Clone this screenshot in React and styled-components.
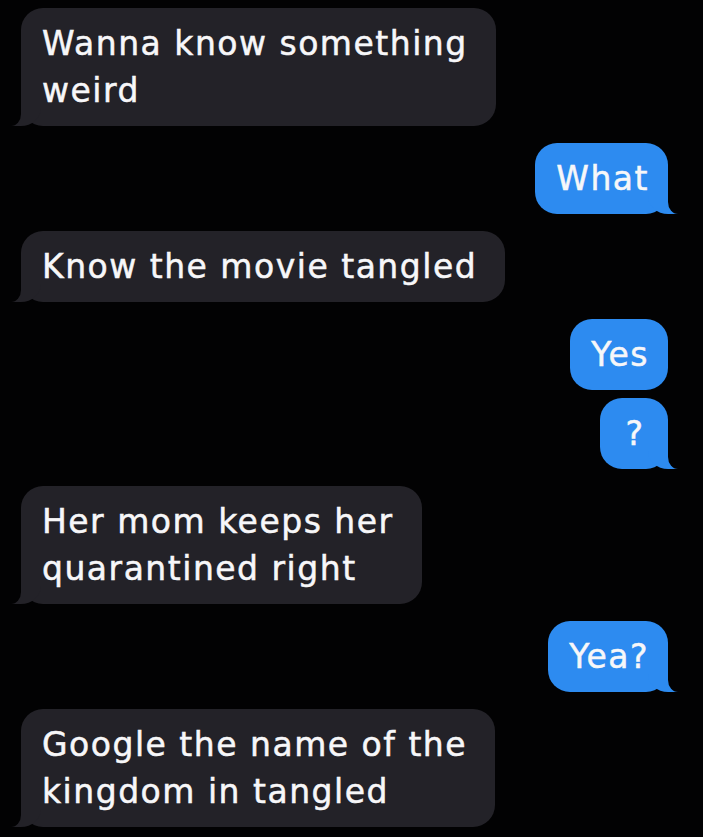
import styled, { createGlobalStyle, css } from 'styled-components'

const GlobalStyle = createGlobalStyle`
  html, body {
    margin: 0;
    padding: 0;
    background: #020203;
  }
`

const GRAY = '#232228'
const BLUE = '#2d8bf0'
const BG = '#020203'

const Thread = styled.div`
  width: 703px;
  height: 837px;
  box-sizing: border-box;
  padding: 8px 35px 0 21px;
  display: flex;
  flex-direction: column;
  overflow: hidden;
  font-family: 'DejaVu Sans', 'Liberation Sans', sans-serif;
`

const incomingTail = css`
  &::before {
    left: -10px;
    border-bottom-right-radius: 20px 18px;
  }
  &::after {
    left: -30px;
    border-bottom-right-radius: 10px 12px;
  }
`

const outgoingTail = css`
  &::before {
    right: -10px;
    border-bottom-left-radius: 20px 18px;
  }
  &::after {
    right: -30px;
    border-bottom-left-radius: 10px 12px;
  }
`

const Bubble = styled.div`
  position: relative;
  align-self: ${(p) => (p.$me ? 'flex-end' : 'flex-start')};
  margin-top: ${(p) => p.$gap}px;
  padding: 12px ${(p) => (p.$me ? '19px' : '28px')} 12px ${(p) => (p.$me ? '21px' : '21px')};
  border-radius: 22px;
  background: ${(p) => (p.$me ? BLUE : GRAY)};
  color: #f7f7f9;
  font-size: 33px;
  line-height: 47px;
  letter-spacing: 1.5px;
  -webkit-text-stroke: 0.5px #f7f7f9;
  white-space: nowrap;
  text-align: left;

  ${(p) =>
    p.$tail &&
    css`
      &::before,
      &::after {
        content: '';
        position: absolute;
        bottom: 0;
        height: 24px;
      }
      &::before {
        width: 30px;
        background: ${p.$me ? BLUE : GRAY};
      }
      &::after {
        width: 30px;
        background: ${BG};
      }
    `}
  ${(p) => p.$tail && (p.$me ? outgoingTail : incomingTail)}
`

const Short = styled(Bubble)`
  min-width: 28px;
  text-align: center;
`

const messages = [
  { me: false, gap: 0, tail: true, lines: ['Wanna know something', 'weird'] },
  { me: true, gap: 17, tail: true, lines: ['What'] },
  { me: false, gap: 17, tail: true, lines: ['Know the movie tangled'] },
  { me: true, gap: 17, tail: false, lines: ['Yes'] },
  { me: true, gap: 8, tail: true, lines: ['?'], short: true },
  { me: false, gap: 17, tail: true, lines: ['Her mom keeps her', 'quarantined right'] },
  { me: true, gap: 17, tail: true, lines: ['Yea?'] },
  { me: false, gap: 17, tail: true, lines: ['Google the name of the', 'kingdom in tangled'] },
]

export default function App() {
  return (
    <>
      <GlobalStyle />
      <Thread>
        {messages.map((m, i) => {
          const Item = m.short ? Short : Bubble
          return (
            <Item key={i} $me={m.me} $gap={m.gap} $tail={m.tail}>
              {m.lines.map((line, j) => (
                <span key={j}>
                  {j > 0 && <br />}
                  {line}
                </span>
              ))}
            </Item>
          )
        })}
      </Thread>
    </>
  )
}
